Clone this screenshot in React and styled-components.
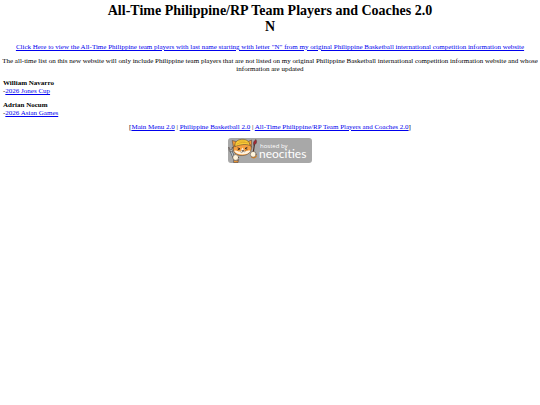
import React from "react"
import styled, { createGlobalStyle } from "styled-components"

const GlobalStyle = createGlobalStyle`
  body {
    margin: 3px 2px;
    background: #fff;
    color: #000;
    font-family: "Liberation Serif", "Times New Roman", serif;
    font-size: 7px;
    line-height: 8px;
  }
`
const Page = styled.main`
  display: flex;
  flex-direction: column;
  gap: 6px;
`
const Title = styled.h1`
  margin: 0;
  padding-bottom: 2px;
  font-size: 14px;
  line-height: 16px;
  text-align: center;
`
const Intro = styled.div`
  display: grid;
  gap: 6px;
  text-align: center;
`
const Text = styled.p`
  margin: 0;
`
const Link = styled.a`
  color: #0000ee;
  text-decoration: underline;
`
const Players = styled.div`
  display: grid;
  gap: 6px;
  padding-left: 1px;
`
const Name = styled.h2`
  margin: 0;
  font-size: 7px;
  line-height: 8px;
`
const Footer = styled.footer`
  display: flex;
  flex-direction: column;
  align-items: center;
  gap: 7px;
`
const Badge = styled.a`
  display: block;
  width: 84px;

  svg {
    display: block;
    width: 100%;
  }
`

const players = [
  { name: "William Navarro", event: "2026 Jones Cup" },
  { name: "Adrian Nocum", event: "2026 Asian Games" },
]

const Player = ({ name, event }) => (
  <section>
    <Name>{name}</Name>
    -<Link href="#">{event}</Link>
  </section>
)

const NeocitiesLogo = () => (
  <svg viewBox="0 0 84 25" role="img" aria-label="Hosted by Neocities">
    <rect width="84" height="25" rx="3" fill="#a8a8a8" />
    <g stroke="#4a3a30" strokeWidth=".5" strokeLinejoin="round" strokeLinecap="round">
      <path d="M3 13 6.5 21" stroke="#3d4850" strokeWidth="2.4" />
      <path d="M3 13 6.5 21" stroke="#b9c3c9" strokeWidth="1.4" />
      <path d="M.8 9.5 1 12.5 3.2 14 5.2 12 4.4 9 3.8 11.5 2.4 12Z" fill="#b8c2c8" />
      <path d="M26.5 6 25 16" stroke="#4e3028" strokeWidth="1.2" />
      <path d="M26 7C24.5 5 26 3 28 1.5 29 3.5 29 6 26 7Z" fill="#a32733" />
      <path d="M5.5 10 4.2 2.5 9.5 4Z" fill="#f29a38" />
      <path d="M19.5 4 23.5 2 23.7 9Z" fill="#f29a38" />
      <path d="M5.5 9C4.5 13 6.5 16.5 12 17.5 18 18 23 15.5 23.5 10L22 6 8 6Z" fill="#f6a040" />
      <path d="M6 13C8 11.5 10 14 12.5 13.5L14.5 9.5 16.5 13C19 14 21 11.5 22.5 13 20 17.5 9.5 18 6 13Z" fill="#fff2df" stroke="none" />
      <path d="M7 8.5C6 4 10 1 15 1.3 19 1.5 22 4 21.8 7.5 17 5.5 12 7 7 8.5Z" fill="#f9cb38" />
      <path d="M9 6C12 4 17 4 20 5M11 3 17 3" fill="none" stroke="#c08a1e" />
      <path d="m10 10 2 .8-2 1m9-2.3-2 1 2 .6" fill="none" stroke="#30231e" strokeWidth=".9" />
      <path d="m14 12.5 2-.3-1 1Z" fill="#5d2b22" />
      <path d="M12.5 14q1.5 1.3 2.6-.6 1.3 1.3 2.5-.5" fill="none" />
      <path d="M6 22q4 2 4.5-.5L10 24.5H6Z" fill="#f29a38" />
      <circle cx="7.7" cy="19.5" r="2.9" fill="#fff4dc" />
      <path d="M24 19q3 1.5 4-1" fill="none" stroke="#d98325" strokeWidth="1.8" />
      <circle cx="25.2" cy="16.3" r="2.9" fill="#fff4dc" />
    </g>
    <text fill="#fff" fontFamily='Lato, "Open Sans", sans-serif'>
      <tspan x="32" y="10" fontSize="6" fontFamily='"Open Sans", sans-serif'>hosted by</tspan>
      <tspan x="31" y="20" fontSize="12">neocities</tspan>
    </text>
  </svg>
)

export default () => (
  <>
    <GlobalStyle />
    <Page>
      <Title>
        All-Time Philippine/RP Team Players and Coaches 2.0
        <br />
        N
      </Title>
      <Intro>
        <Text>
          <Link href="#">
            Click Here to view the All-Time Philippine team players with last name starting with letter "N" from my original Philippine Basketball international competition information website
          </Link>
        </Text>
        <Text>
          The all-time list on this new website will only include Philippine team players that are not listed on my original Philippine Basketball international competition information website and whose information are updated
        </Text>
      </Intro>
      <Players>
        {players.map(player => <Player key={player.name} {...player} />)}
      </Players>
      <Footer>
        <nav>
          [<Link href="#">Main Menu 2.0</Link> | <Link href="#">Philippine Basketball 2.0</Link> | <Link href="#">All-Time Philippine/RP Team Players and Coaches 2.0</Link>]
        </nav>
        <Badge href="#">
          <NeocitiesLogo />
        </Badge>
      </Footer>
    </Page>
  </>
)
